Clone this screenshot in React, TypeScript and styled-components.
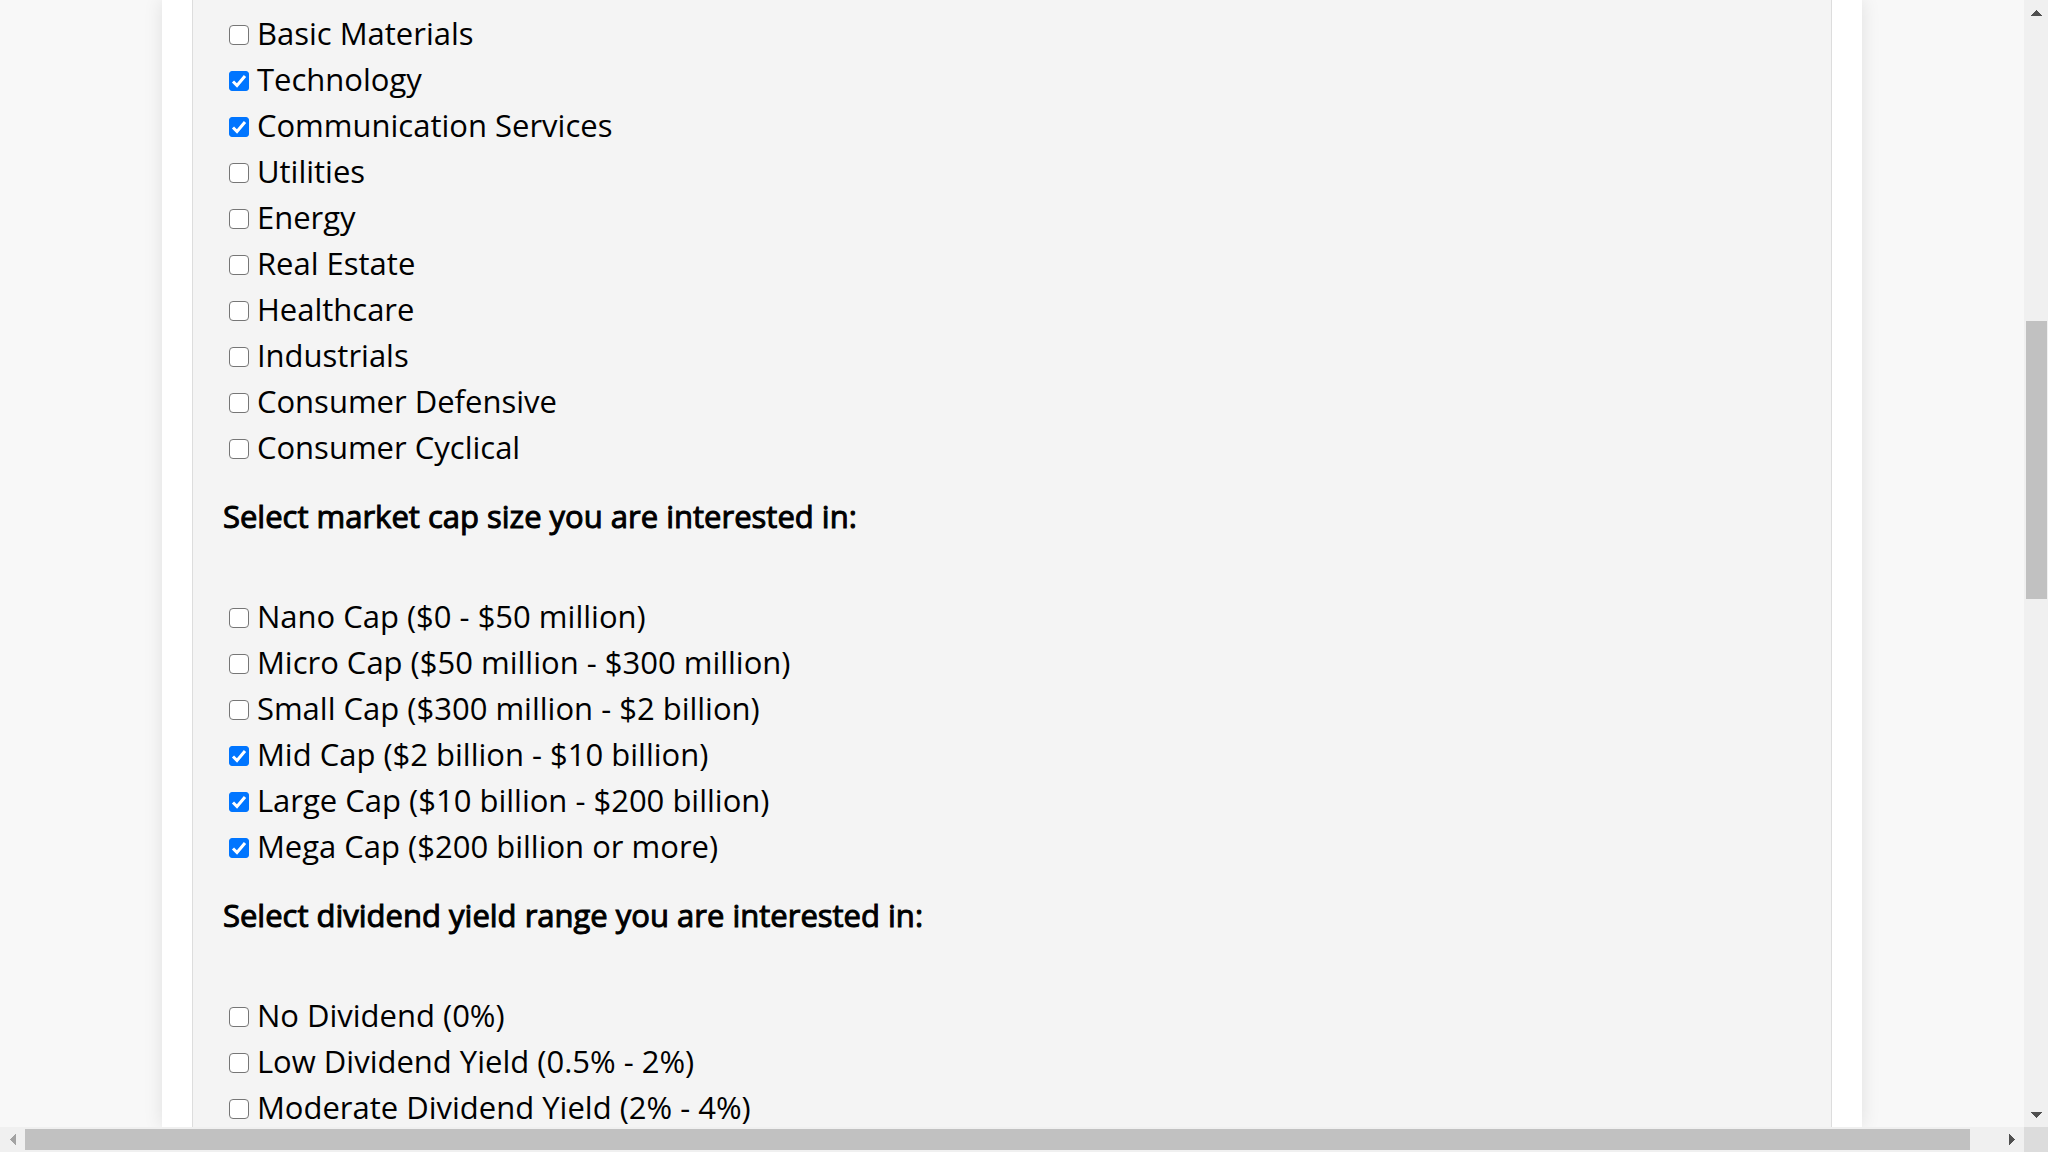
import React, { useState } from "react";
import styled, { createGlobalStyle } from "styled-components";

const GlobalStyle = createGlobalStyle`
  *, *::before, *::after {
    box-sizing: border-box;
  }
  body {
    margin: 0;
    background: #f8f8f8;
    color: #000;
    font-family: "Open Sans", "Noto Sans", sans-serif;
    font-size: 31px;
    line-height: 46px;
  }
`;

const Window = styled.div`
  display: grid;
  grid-template-columns: minmax(0, 1fr) 24px;
  grid-template-rows: minmax(0, 1fr) 25px;
  height: 100vh;
`;

const Viewport = styled.div`
  display: flex;
  justify-content: center;
  overflow: hidden;
`;

const Page = styled.main`
  flex: none;
  width: 84%;
  min-height: 100%;
  padding: 0 30px;
  background: #fff;
  box-shadow: 0 0 18px rgba(0, 0, 0, 0.1);
`;

const Form = styled.form`
  min-height: 100%;
  padding: 10px 30px 0;
  background: #f4f4f4;
  border: solid #ddd;
  border-width: 0 1px;
`;

const Group = styled.fieldset`
  min-width: 0;
  margin: 0;
  padding: 0;
  border: 0;
`;

const Heading = styled.legend`
  padding: 23px 0 54px;
  -webkit-text-stroke: 1px #000;
`;

const Option = styled.label`
  display: flex;
  align-items: center;
  gap: 8px;
  padding-left: 6px;
  white-space: nowrap;
`;

const Checkbox = styled.input`
  appearance: none;
  flex: none;
  width: 20px;
  height: 20px;
  margin: 4px 0 0;
  border: 1px solid #767676;
  border-radius: 4px;
  background: #fff;

  &:checked {
    border-color: #0075ff;
    border-radius: 3px;
    background: #0075ff
      url("data:image/svg+xml,%3Csvg xmlns='http://www.w3.org/2000/svg' viewBox='0 0 20 20'%3E%3Cpath d='M4 10.5L8 14.5L16 5' fill='none' stroke='white' stroke-width='3'/%3E%3C/svg%3E")
      center / 20px 20px no-repeat;
  }
`;

const Track = styled.div<{ $vertical?: boolean }>`
  display: flex;
  flex-direction: ${(p) => (p.$vertical ? "column" : "row")};
  padding: ${(p) => (p.$vertical ? "0 1px 0 2px" : "2px 0")};
  background: #f0f0f0;
`;

const Arrow = styled.button<{ $vertical?: boolean }>`
  display: flex;
  align-items: center;
  justify-content: center;
  flex: none;
  width: ${(p) => (p.$vertical ? "auto" : "25px")};
  height: ${(p) => (p.$vertical ? "25px" : "auto")};
  padding: 0;
  border: 0;
  background: transparent;
  color: #505050;

  &:disabled {
    color: #a3a3a3;
  }
`;

const Gap = styled.div<{ $grow: number }>`
  flex: ${(p) => p.$grow} 1 0;
`;

const Thumb = styled(Gap)`
  background: #c1c1c1;
`;

const Corner = styled.div`
  background: #dcdcdc;
`;

type Choice = [label: string, checked: boolean];

const sectors: Choice[] = [
  ["Basic Materials", false],
  ["Technology", true],
  ["Communication Services", true],
  ["Utilities", false],
  ["Energy", false],
  ["Real Estate", false],
  ["Healthcare", false],
  ["Industrials", false],
  ["Consumer Defensive", false],
  ["Consumer Cyclical", false],
];

const caps: Choice[] = [
  ["Nano Cap ($0 - $50 million)", false],
  ["Micro Cap ($50 million - $300 million)", false],
  ["Small Cap ($300 million - $2 billion)", false],
  ["Mid Cap ($2 billion - $10 billion)", true],
  ["Large Cap ($10 billion - $200 billion)", true],
  ["Mega Cap ($200 billion or more)", true],
];

const yields: Choice[] = [
  ["No Dividend (0%)", false],
  ["Low Dividend Yield (0.5% - 2%)", false],
  ["Moderate Dividend Yield (2% - 4%)", false],
];

function ChoiceRow({ id, label, initial }: { id: string; label: string; initial: boolean }) {
  const [checked, setChecked] = useState(initial);
  return (
    <Option htmlFor={id}>
      <Checkbox
        id={id}
        type="checkbox"
        checked={checked}
        onChange={(e) => setChecked(e.target.checked)}
      />
      {label}
    </Option>
  );
}

function ChoiceGroup({ name, title, choices }: { name: string; title?: string; choices: Choice[] }) {
  return (
    <Group>
      {title && <Heading>{title}</Heading>}
      {choices.map(([label, checked], i) => (
        <ChoiceRow key={label} id={`${name}-${i}`} label={label} initial={checked} />
      ))}
    </Group>
  );
}

const arrowPaths = {
  up: "M0 6h11v-1h-1v-1h-1v-1h-1v-1h-1v-1h-1v-1h-1v1h-1v1h-1v1h-1v1h-1v1h-1z",
  down: "M0 0h11v1h-1v1h-1v1h-1v1h-1v1h-1v1h-1v-1h-1v-1h-1v-1h-1v-1h-1v-1h-1z",
  left: "M6 0v11h-1v-1h-1v-1h-1v-1h-1v-1h-1v-1h-1v-1h1v-1h1v-1h1v-1h1v-1h1v-1z",
  right: "M0 0v11h1v-1h1v-1h1v-1h1v-1h1v-1h1v-1h-1v-1h-1v-1h-1v-1h-1v-1h-1v-1z",
};

function ScrollArrow({ to, disabled }: { to: keyof typeof arrowPaths; disabled?: boolean }) {
  const vertical = to === "up" || to === "down";
  const [w, h] = vertical ? [11, 6] : [6, 11];
  return (
    <Arrow type="button" aria-label={`Scroll ${to}`} $vertical={vertical} disabled={disabled}>
      <svg width={w} height={h} viewBox={`0 0 ${w} ${h}`} shapeRendering="crispEdges">
        <path d={arrowPaths[to]} fill="currentColor" />
      </svg>
    </Arrow>
  );
}

export default function App() {
  return (
    <Window>
      <GlobalStyle />
      <Viewport>
        <Page>
          <Form>
            <ChoiceGroup name="sector" choices={sectors} />
            <ChoiceGroup
              name="cap"
              title="Select market cap size you are interested in:"
              choices={caps}
            />
            <ChoiceGroup
              name="yield"
              title="Select dividend yield range you are interested in:"
              choices={yields}
            />
          </Form>
        </Page>
      </Viewport>
      <Track $vertical>
        <ScrollArrow to="up" />
        <Gap $grow={296} />
        <Thumb $grow={278} />
        <Gap $grow={503} />
        <ScrollArrow to="down" />
      </Track>
      <Track>
        <ScrollArrow to="left" disabled />
        <Thumb $grow={1945} />
        <Gap $grow={29} />
        <ScrollArrow to="right" />
      </Track>
      <Corner />
    </Window>
  );
}
